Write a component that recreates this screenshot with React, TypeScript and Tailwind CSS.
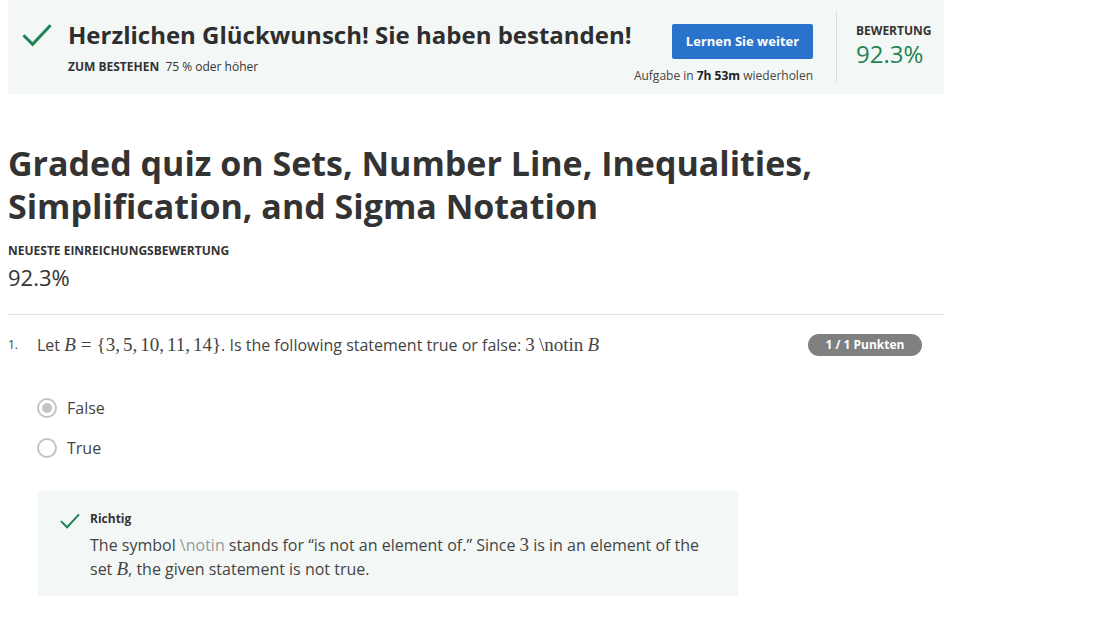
import React from 'react';

const sans = { fontFamily: '"Open Sans", "Noto Sans", Arial, sans-serif' };
const math = { fontFamily: '"Liberation Serif", "DejaVu Serif", serif' };

function Check({ className }: { className?: string }) {
  return (
    <svg viewBox="0 0 24 24" className={className} fill="none" stroke="currentColor" strokeWidth="2.4" strokeLinecap="square">
      <path d="M2 13 L8.5 19.5 L22 5" />
    </svg>
  );
}

function Radio({ checked }: { checked?: boolean }) {
  return (
    <span className="w-[20px] h-[20px] rounded-full border-2 border-[#c4c4c4] bg-white flex items-center justify-center">
      {checked && <span className="w-[10px] h-[10px] rounded-full bg-[#c4c4c4]" />}
    </span>
  );
}

function M({ children, i }: { children: React.ReactNode; i?: boolean }) {
  return (
    <span className={`text-[19px] leading-none ${i ? 'italic' : ''}`} style={math}>
      {children}
    </span>
  );
}

export default function App() {
  return (
    <div className="w-[1102px] h-[627px] bg-white text-[#333] overflow-hidden" style={sans}>
      <div className="w-[936px] ml-[8px]">
        {/* Banner */}
        <div className="h-[94px] bg-[#f3f8f6] flex">
          <div className="flex-1 pl-[14px] pt-[18px]">
            <div className="flex items-center gap-[16px]">
              <Check className="w-[30px] h-[30px] text-[#1f8354]" />
              <h1 className="text-[24px] font-bold text-[#2e2e2e] leading-[34px]">Herzlichen Glückwunsch! Sie haben bestanden!</h1>
            </div>
            <p className="ml-[46px] mt-[6px] text-[12px] text-[#333]">
              <span className="font-bold">ZUM BESTEHEN</span>&nbsp; 75 % oder höher
            </p>
          </div>
          <div className="flex flex-col items-end pt-[24px] pr-[23px]">
            <button className="w-[141px] h-[35px] bg-[#2a73cc] rounded-[2px] text-white text-[13px] font-bold">Lernen Sie weiter</button>
            <p className="mt-[8px] text-[12px] text-[#444]">
              Aufgabe in <span className="font-bold text-[#222]">7h 53m</span> wiederholen
            </p>
          </div>
          <div className="w-px bg-[#dcdcdc] my-[12px]" />
          <div className="w-[107px] pl-[19px] pt-[22px]">
            <p className="text-[12px] font-bold text-[#333]">BEWERTUNG</p>
            <p className="text-[24px] text-[#1f8354] leading-[28px]">92.3%</p>
          </div>
        </div>

        {/* Heading */}
        <h2 className="mt-[48px] text-[34px] font-bold leading-[43px] text-[#333]">
          Graded quiz on Sets, Number Line, Inequalities,
          <br />
          Simplification, and Sigma Notation
        </h2>
        <p className="mt-[14px] text-[12px] font-bold text-[#333]">NEUESTE EINREICHUNGSBEWERTUNG</p>
        <p className="mt-[2px] text-[22px] text-[#333] leading-[30px]">92.3%</p>

        <div className="mt-[22px] border-t border-[#e1e1e1]" />

        {/* Question */}
        <div className="mt-[18px] flex items-center">
          <span className="w-[29px] text-[12px] text-[#444]">1.</span>
          <p className="flex-1 text-[16px] text-[#444]">
            Let <M i>B</M>
            <span className="mx-[5px]"><M>=</M></span>
            <M>
              {'{'}3,<span className="ml-[3px]">5,</span>
              <span className="ml-[3px]">10,</span>
              <span className="ml-[3px]">11,</span>
              <span className="ml-[3px]">14</span>
              {'}'}
            </M>
            . Is the following statement true or false: <M>3</M> <M>\notin</M> <M i>B</M>
          </p>
          <span className="mr-[22px] w-[114px] h-[22px] rounded-full bg-[#808080] text-white text-[12px] font-bold flex items-center justify-center">
            1 / 1 Punkten
          </span>
        </div>

        <div className="ml-[29px] mt-[39px] flex flex-col gap-[16px]">
          <label className="flex items-center gap-[10px] text-[16px] text-[#444]">
            <Radio checked />
            False
          </label>
          <label className="flex items-center gap-[10px] text-[16px] text-[#444]">
            <Radio />
            True
          </label>
        </div>

        {/* Feedback */}
        <div className="ml-[30px] mt-[31px] w-[700px] h-[105px] bg-[#f3f8f6] flex gap-[10px] pl-[22px] pt-[19px]">
          <Check className="w-[20px] h-[20px] text-[#1f8354] mt-[1px]" />
          <div>
            <p className="text-[12px] font-bold text-[#333] leading-[18px]">Richtig</p>
            <p className="mt-[5px] text-[16px] leading-[24px] text-[#444] w-[622px]">
              The symbol <span className="text-[#999]">\notin</span> stands for “is not an element of.” Since <M>3</M> is in an element of the set{' '}
              <M i>B</M>, the given statement is not true.
            </p>
          </div>
        </div>
      </div>
    </div>
  );
}
